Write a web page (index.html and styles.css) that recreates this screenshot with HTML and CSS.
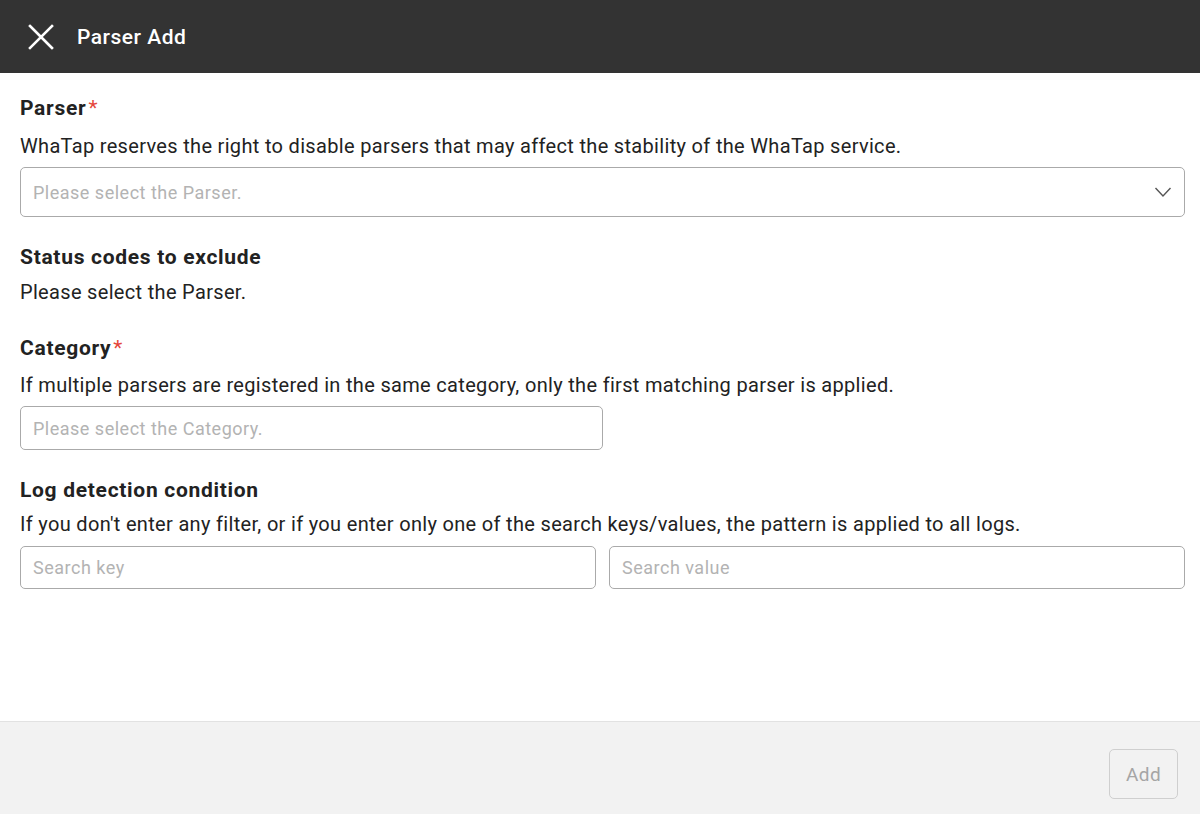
FILE: index.html
```html
<!DOCTYPE html>
<html>
<head>
<meta charset="utf-8">
<link rel="stylesheet" href="styles.css">
</head>
<body>
<div class="page">
  <header class="topbar">
    <button class="close" aria-label="Close">
      <svg width="28" height="28" viewBox="0 0 28 28"><path d="M3 3L25 25M25 3L3 25" stroke="#fff" stroke-width="2.6" stroke-linecap="square" fill="none"/></svg>
    </button>
    <h1 class="title">Parser Add</h1>
  </header>
  <main class="content">
    <section class="field f1">
      <div class="label">Parser<span class="req">*</span></div>
      <p class="desc">WhaTap reserves the right to disable parsers that may affect the stability of the WhaTap service.</p>
      <div class="select">
        <span class="ph">Please select the Parser.</span>
        <svg class="chev" width="18" height="12" viewBox="0 0 18 12"><path d="M1.5 2L9 10L16.5 2" stroke="#555" stroke-width="1.4" fill="none"/></svg>
      </div>
    </section>
    <section class="field f2">
      <div class="label">Status codes to exclude</div>
      <p class="desc nomb">Please select the Parser.</p>
    </section>
    <section class="field f3">
      <div class="label">Category<span class="req">*</span></div>
      <p class="desc">If multiple parsers are registered in the same category, only the first matching parser is applied.</p>
      <div class="input cat"><span class="ph">Please select the Category.</span></div>
    </section>
    <section class="field f4">
      <div class="label">Log detection condition</div>
      <p class="desc">If you don't enter any filter, or if you enter only one of the search keys/values, the pattern is applied to all logs.</p>
      <div class="pair">
        <div class="input short"><span class="ph">Search key</span></div>
        <div class="input short"><span class="ph">Search value</span></div>
      </div>
    </section>
  </main>
  <footer class="footer">
    <button class="add" disabled>Add</button>
  </footer>
</div>
</body>
</html>
```
FILE: styles.css
```css
* { box-sizing: border-box; }
html, body { margin: 0; padding: 0; }
body {
  font-family: Roboto, "Noto Sans", sans-serif;
  color: #222;
  background: #fff;
}
.page {
  display: flex;
  flex-direction: column;
  height: 814px;
}
.topbar {
  height: 73px;
  background: #333333;
  display: flex;
  align-items: center;
  padding-left: 27px;
  flex-shrink: 0;
}
.close {
  background: none;
  border: 0;
  padding: 0;
  width: 28px;
  height: 28px;
  display: flex;
  margin-right: 22px;
}
.title {
  margin: 0;
  color: #fff;
  font-size: 21px;
  font-weight: 500;
  letter-spacing: 0.5px;
}
.content {
  flex: 1;
  padding: 23px 15px 0 20px;
}
.field { margin-bottom: 28px; }
.label {
  font-size: 21px;
  font-weight: 700;
  line-height: 24px;
  color: #222;
  margin-bottom: 12px;
  letter-spacing: 0.7px;
}
.req { color: #e5473c; font-weight: 400; margin-left: 2px; }
.desc {
  margin: 0 0 9px;
  font-size: 20px;
  line-height: 26px;
  color: #222;
  letter-spacing: 0.32px;
}
.desc.nomb { margin-bottom: 0; }
.f1 .label { margin-bottom: 13px; }
.f1 .desc { margin-bottom: 8px; }
.f2 { margin-bottom: 31px; }
.f2 .label { margin-bottom: 10px; }
.f3 .desc { margin-bottom: 8px; }
.f4 .label { margin-bottom: 9px; }
.select {
  height: 50px;
  border: 1px solid #aaa;
  border-radius: 5px;
  display: flex;
  align-items: center;
  justify-content: space-between;
  padding: 0 12px 0 12px;
}
.ph { color: #b3b3b3; font-size: 18px; letter-spacing: 0.5px; }
.input {
  height: 44px;
  border: 1px solid #aaa;
  border-radius: 5px;
  display: flex;
  align-items: center;
  padding: 0 12px;
}
.input.short { height: 43px; }
.input.cat { width: 583px; }
.pair {
  display: grid;
  grid-template-columns: 1fr 1fr;
  gap: 13px;
}
.footer {
  height: 93px;
  flex-shrink: 0;
  background: #f2f2f2;
  border-top: 1px solid #e2e2e2;
  display: flex;
  justify-content: flex-end;
  align-items: flex-start;
  padding: 27px 22px 0 0;
}
.add {
  width: 69px;
  height: 50px;
  background: #f2f2f2;
  border: 1px solid #cfcfcf;
  border-radius: 5px;
  color: #a5a5a5;
  font-family: Roboto, sans-serif;
  font-size: 19px;
  letter-spacing: 0.4px;
}
```
